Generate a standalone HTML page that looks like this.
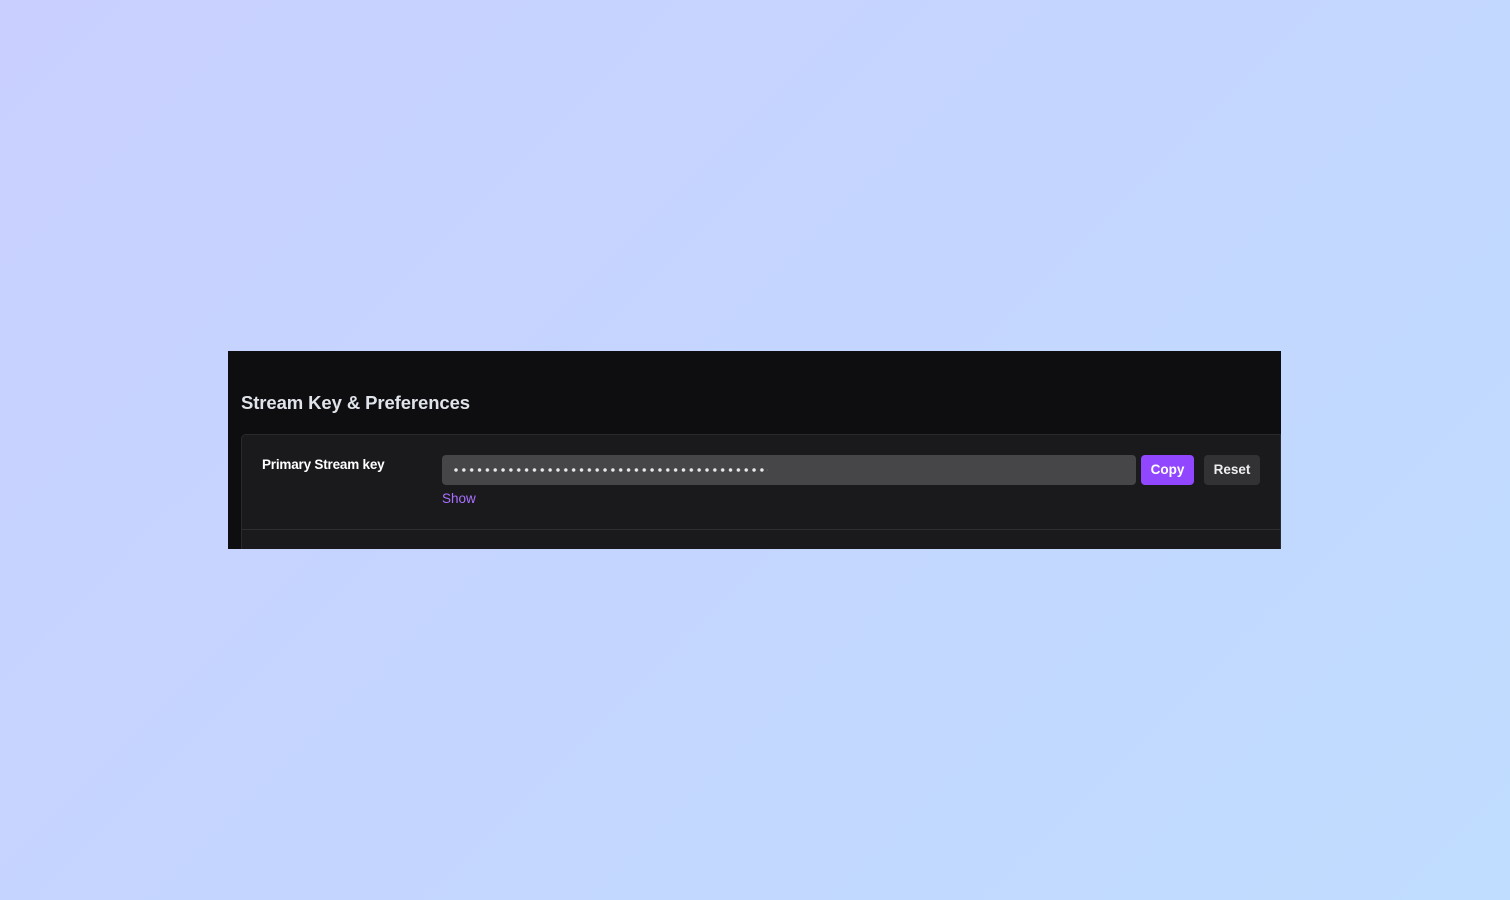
<!DOCTYPE html>
<html><head><style>
html,body{margin:0;padding:0}
body{width:1510px;height:900px;position:relative;overflow:hidden;background:linear-gradient(135deg,#c9d0ff 0%,#c4d6ff 50%,#c0dcff 100%);font-family:"Liberation Sans",sans-serif}
.panel{position:absolute;left:228px;top:351px;width:1053px;height:198px;background:#0e0e10;overflow:hidden}
h2{position:absolute;left:13px;top:41px;margin:0;font-size:18.5px;font-weight:bold;color:#dfe3ea;letter-spacing:-0.1px}
.card{position:absolute;left:13px;top:83px;width:1040px;height:130px;background:#1a1a1d;border:1px solid #2a2a2e;border-radius:5px 0 0 0;box-sizing:border-box}
.lbl{position:absolute;left:20px;top:22px;font-size:13.5px;font-weight:bold;color:#fff;letter-spacing:-0.2px}
.inp{position:absolute;left:200px;top:20px;width:694px;height:30px;background:#464649;border-radius:4px}
.dots{position:absolute;left:12px;top:13px;width:314px;height:4px;background:radial-gradient(circle at 2px 2px,#e8e8ea 1.5px,transparent 2px) 0 0/7.85px 4px repeat-x}
.show{position:absolute;left:200px;top:56px;font-size:13.5px;color:#a970ff}
.btn{position:absolute;top:20px;height:30px;border-radius:4px;font-size:13.5px;font-weight:bold;color:#fff;text-align:center;line-height:30px}
.copy{left:899px;width:53px;background:#9147ff}
.reset{left:962px;width:56px;background:#323235;color:#efeff1}
.div{position:absolute;left:0;right:0;top:94px;height:1px;background:#2e2e32}
</style></head><body>
<div class="panel">
<h2>Stream Key &amp; Preferences</h2>
<div class="card">
<div class="lbl">Primary Stream key</div>
<div class="inp"><div class="dots"></div></div>
<div class="btn copy">Copy</div>
<div class="btn reset">Reset</div>
<div class="show">Show</div>
<div class="div"></div>
</div>
</div>
</body></html>
